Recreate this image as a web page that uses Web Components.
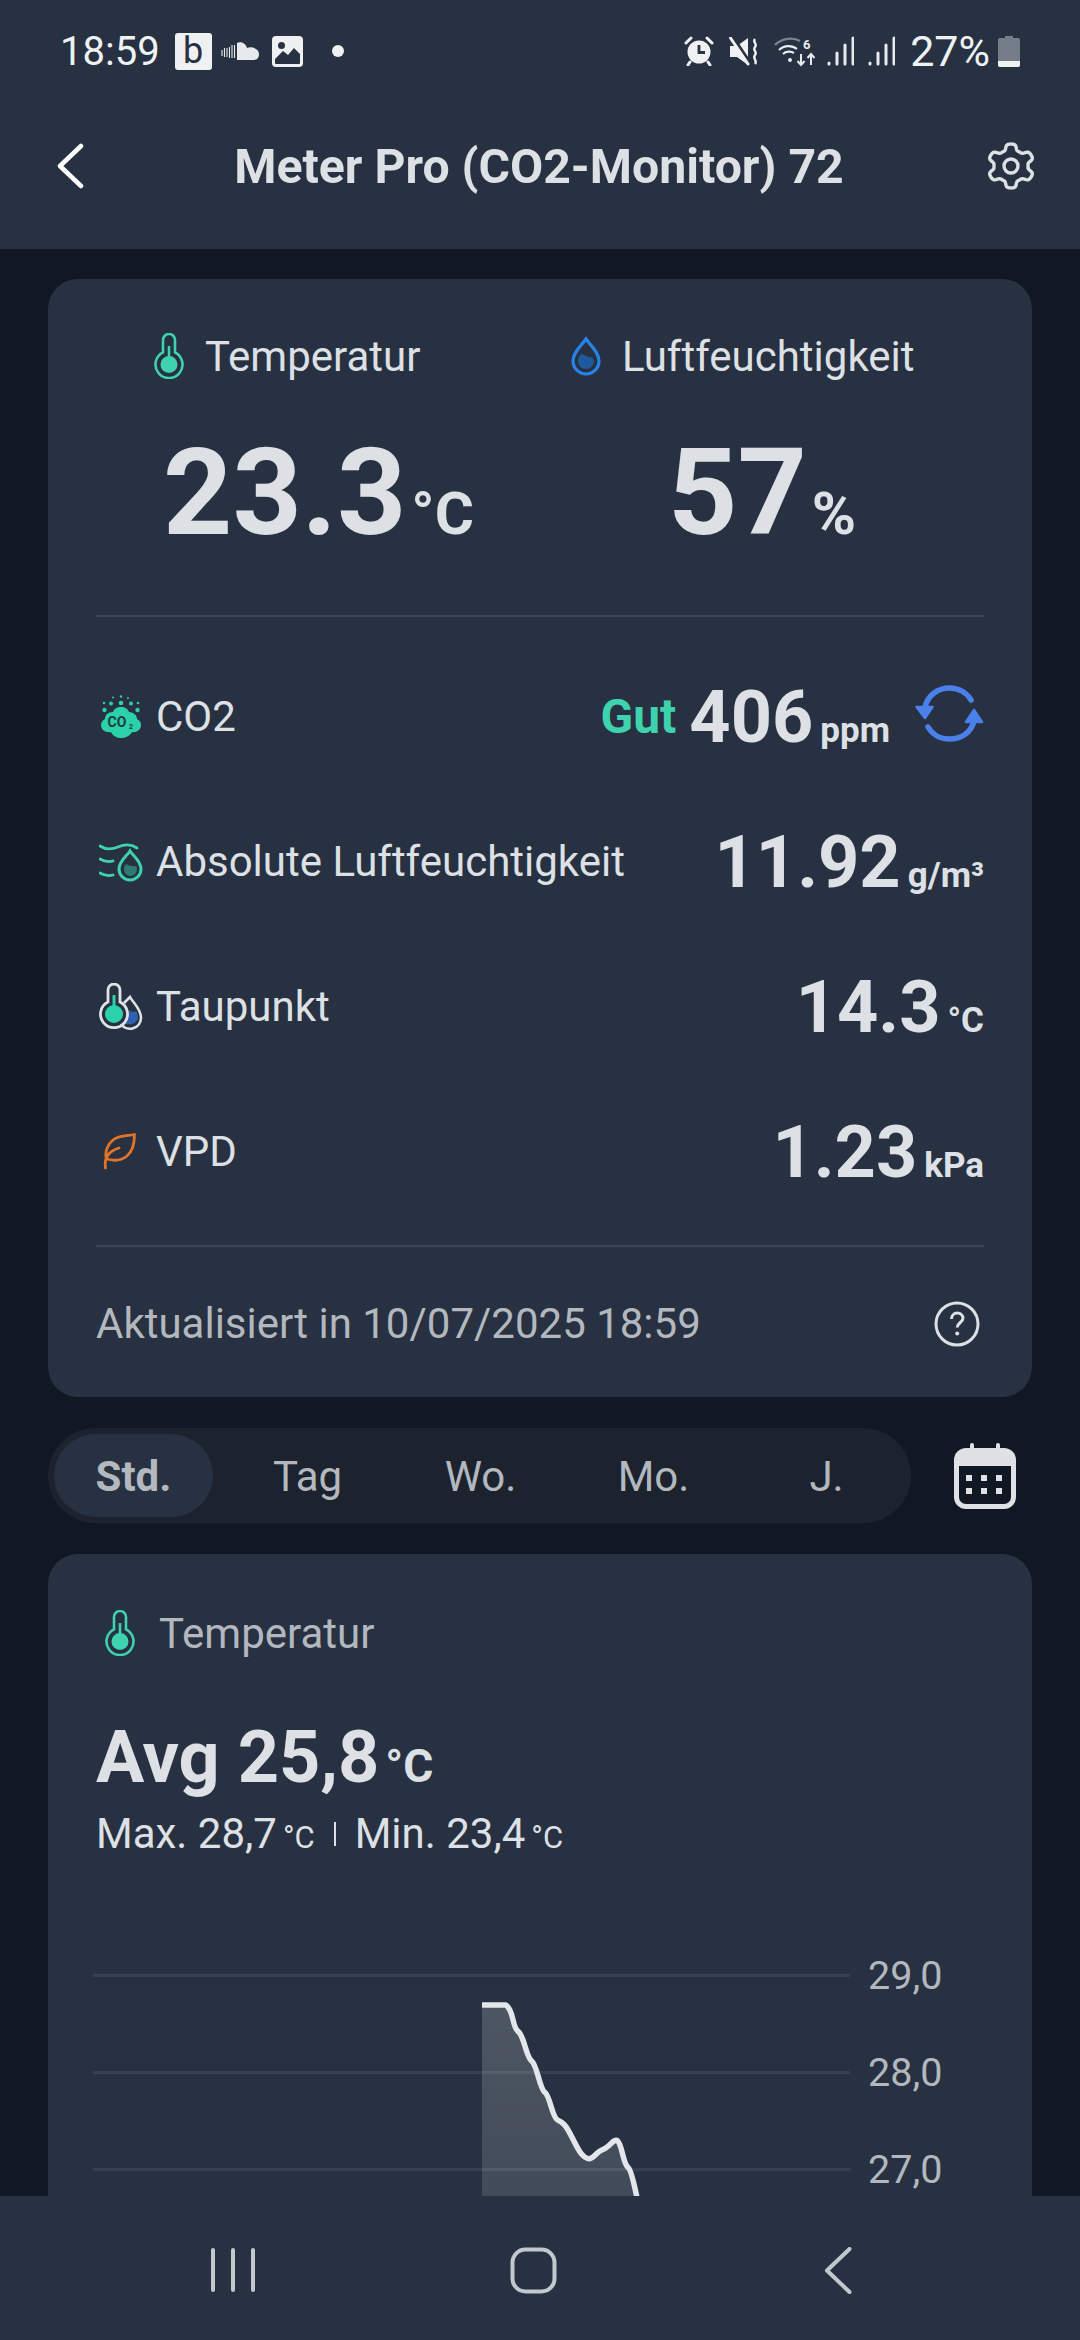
<!DOCTYPE html>
<html lang="de"><head><meta charset="utf-8"><title>Meter Pro</title>
<style>
html,body{margin:0;padding:0;height:100%;}
body{background:#101823;font-family:Roboto,"Liberation Sans",sans-serif;color:#dde0e4;overflow:hidden;}
app-screen{height:2340px;}
</style></head><body>
<app-screen>
  <top-bar slot="top" title="Meter Pro (CO2-Monitor) 72"></top-bar>
  <current-card></current-card>
  <range-tabs></range-tabs>
  <chart-card></chart-card>
</app-screen>
<script>
const thermo=`<svg width="30" height="46" viewBox="0 0 30 46" fill="none" style="display:block"><path d="M9 19.400V7a6 6 0 0 1 12 0v12.400a13.500 13.500 0 1 1-12 0Z" stroke="#3ed3ae" stroke-width="2.600"/><circle cx="15" cy="31.500" r="8.500" fill="#3ed3ae"/><path d="M15 13v16" stroke="#3ed3ae" stroke-width="2.600"/></svg>`;
const gearPath=(()=>{let p=[];for(let i=0;i<180;i++){const a=i/180*Math.PI*2,r=19+3*Math.tanh(2.2*Math.cos(6*(a-Math.PI/2)));p.push((25+1.06*r*Math.cos(a)).toFixed(2)+' '+(24+r*Math.sin(a)).toFixed(2));}return 'M'+p.join('L')+'Z';})();
const ICONS={
 back:`<svg width="30" height="48" viewBox="0 0 30 48" fill="none"><path d="M24 4 3 24l21 20" stroke="#fff" stroke-width="4.500" stroke-linecap="round" stroke-linejoin="round"/></svg>`,
 gear:`<svg width="50" height="48" viewBox="0 0 50 48" fill="none" stroke="#dde0e4" stroke-width="3.400" stroke-linejoin="round"><path d="${gearPath}"/><circle cx="25" cy="24" r="7"/></svg>`,
 sc:`<svg width="39" height="19" viewBox="0 0 39 19"><g stroke="#e7e9ec" stroke-width="1.100"><path d="M1 8v6M3.500 6v9M6 6v9M8.500 5v11M11 3v13M13.500 3v13"/></g><path d="M16 1c5-2 9 1 10 5 5-2 12 1 12 6s-3 6-6 6H16Z" fill="#e7e9ec"/></svg>`,
 img:`<svg width="31" height="31" viewBox="0 0 31 31"><rect width="31" height="31" rx="4" fill="#eef0f2"/><rect x="3" y="3" width="25" height="25" rx="1" fill="#273141"/><path d="M3 23 11 15l5 4 6-7 6 6V3H3Z" fill="#eef0f2"/><circle cx="9.500" cy="9.500" r="3.500" fill="#273141"/></svg>`,
 alarm:`<svg width="30" height="30" viewBox="0 0 30 30"><circle cx="15" cy="16" r="11.500" fill="#f0f1f3"/><path d="M15 9v7.500h6" fill="none" stroke="#273141" stroke-width="2.800"/><path d="M2 7 7 2M28 7 23 2M6 26 4 29M24 26l2 3" stroke="#f0f1f3" stroke-width="3" stroke-linecap="round"/></svg>`,
 mute:`<svg width="30" height="29" viewBox="0 0 30 29"><path d="M1 9h7l11-8v27l-11-8H1Z" fill="#f0f1f3"/><path d="M4 0 22 27" stroke="#273141" stroke-width="3"/><path d="M1.500 1 19 27" stroke="#f0f1f3" stroke-width="3" stroke-linecap="round"/><path d="M26 2c-3 3 3 5 0 8s3 5 0 8 3 6 0 9" fill="none" stroke="#f0f1f3" stroke-width="2.400"/></svg>`,
 wifi:`<svg width="44" height="31" viewBox="0 0 44 31" fill="none"><path d="M1 9C8 2 19 1 26 5" stroke="#7b838e" stroke-width="2.400"/><path d="M5 14c5-5 13-5 18-1M9 18c3-3 8-3 11-1" stroke="#e8eaed" stroke-width="2.200"/><circle cx="16" cy="24" r="2" fill="#e8eaed"/><path d="M27 18v11m-3.500-4 3.500 4 3.500-4M37 29V18m-3.500 4 3.500-4 3.500 4" stroke="#e8eaed" stroke-width="2"/><text x="29" y="13" font-size="13" font-family="Roboto" font-weight="700" fill="#e8eaed">6</text></svg>`,
 signal:`<svg width="27" height="30" viewBox="0 0 27 30" fill="none" stroke="#e8eaed" stroke-width="3" stroke-linecap="round"><path d="M2 28v-1M10 28V17M18 28V9M26 28V2" /></svg>`,
 batt:`<svg width="22" height="31" viewBox="0 0 22 31"><path d="M7 0h8v2h5a2 2 0 0 1 2 2v25a2 2 0 0 1-2 2H2a2 2 0 0 1-2-2V4a2 2 0 0 1 2-2h5Z" fill="#757d88"/><path d="M0 25h22v4a2 2 0 0 1-2 2H2a2 2 0 0 1-2-2Z" fill="#f0f1f3"/></svg>`,
 drop:`<svg width="30" height="40" viewBox="0 0 30 40" fill="none" style="display:block"><path d="M15 3C11 9 2 16 2 25a13 13 0 0 0 26 0C28 16 19 9 15 3Z" stroke="#2684e8" stroke-width="3.200"/><path d="M7 25c0-3 1.500-5 3-7 3 0 5 3 8 3 2.500 0 4 1 5 3 0 6-4 9-8 9s-8-3-8-8Z" fill="#1d5a9e"/></svg>`,
 co2:`<svg style="margin-left:4px" width="42" height="43" viewBox="0 0 42 43"><path d="M21 12c4 0 7 2 8 5 4 0 8 3 8 7 3 2 4 3 4 6 0 5-5 8-9 7-2 4-7 6-11 6s-8-2-10-6c-5 1-10-2-10-7 0-3 2-5 4-6 0-4 3-7 8-7 1-3 4-5 8-5Z" fill="#2ad1a9"/><g fill="#2ad1a9"><circle cx="4.500" cy="15" r="2.200"/><circle cx="37.500" cy="15" r="2.200"/><circle cx="11" cy="8.500" r="2"/><circle cx="31" cy="8.500" r="2"/><circle cx="21" cy="8" r="2.300"/><circle cx="4" cy="8" r="1.300"/><circle cx="38" cy="8" r="1.300"/><circle cx="13" cy="2.500" r="1"/><circle cx="21" cy="1.500" r="1.200"/><circle cx="28" cy="3" r="1"/></g><text x="7.500" y="32" font-family="Roboto,sans-serif" font-weight="700" font-size="14" fill="#1e3a3f">CO</text><text x="29" y="33.500" font-family="Roboto,sans-serif" font-weight="700" font-size="7" fill="#1e3a3f">2</text></svg>`,
 abs:`<svg style="margin-left:3px" width="44" height="40" viewBox="0 0 44 40" fill="none"><path d="M1 4c6 4 11 4 18 1s13-3 19 1M1 17c5 3 9 3 13 2M1 31c5 3 9 3 13 2" stroke="#3ed3ae" stroke-width="2.800" stroke-linecap="round"/><path d="M31 9c-3 5-11 10-11 18a11 11 0 0 0 22 0c0-8-8-13-11-18Z" stroke="#3ed3ae" stroke-width="3"/><path d="M25 27c0-2 1-4 2-5 3 1 5 3 10 2 .5 1 1 2 1 3 0 4-3 7-6.500 7S25 31 25 27Z" fill="#2f7a72"/></svg>`,
 dew:`<svg style="margin-left:3px" width="44" height="47" viewBox="0 0 44 47" fill="none"><path d="M25 20 31 14c3 6 11 11 11 21a11 11 0 0 1-20 6" stroke="#dfe3e7" stroke-width="2.600"/><path d="M29 27c2 3 0 9-5 13 6 3 15 1 15-6 0-2-1-4-2-6-3 2-5 0-8-1Z" fill="#2f5fae"/><path d="M9 19V7a6 6 0 0 1 12 0v12a13.500 13.500 0 1 1-12 0Z" stroke="#dfe3e7" stroke-width="2.800"/><circle cx="15" cy="31" r="9" fill="#2ad1a9"/><path d="M15 12v15" stroke="#2ad1a9" stroke-width="3"/></svg>`,
 leaf:`<svg style="margin-left:7px" width="33" height="37" viewBox="0 0 33 37" fill="none"><path d="M31.500 1.500C24 3 16 2 10 7 5 11 2 18 3 24c0 1 1 2 3 2.500C12 28 19 27 24 23c6-5 7.500-13 7.500-21.500ZM2.500 35C1 25 6 18 16 15" stroke="#e2742a" stroke-width="2.800" stroke-linecap="round" stroke-linejoin="round"/></svg>`,
 sync:`<svg width="69" height="58" viewBox="0 0 69 58" fill="none" style="display:block"><path d="M10 22C13 10 23 3 34.500 3 44 3 52 8 56 15M59 36C56 48 46 54 34.500 54 25 54 17 49 13 42" stroke="#4a80ea" stroke-width="5.500" stroke-linecap="round"/><path d="M1.500 22h16L10 33ZM51 37h16L59 25Z" fill="#4a80ea" stroke="#4a80ea" stroke-width="2.500" stroke-linejoin="round"/></svg>`,
 help:`<svg width="46" height="46" viewBox="0 0 46 46" fill="none"><circle cx="23" cy="23" r="21" stroke="#dde0e4" stroke-width="3"/><path d="M17.500 18c0-3.500 2.500-6 5.700-6 3.300 0 5.800 2.300 5.800 5.300 0 4-5.800 4.500-5.800 9.200" stroke="#dde0e4" stroke-width="3"/><circle cx="23.200" cy="32.500" r="2" fill="#dde0e4"/></svg>`,
 cal:`<svg width="62" height="66" viewBox="0 0 62 66"><rect x="16" y="0" width="4" height="10" rx="2" fill="#dfe1e4"/><rect x="42" y="0" width="4" height="10" rx="2" fill="#dfe1e4"/><rect x="0" y="5" width="62" height="61" rx="12" fill="#dfe1e4"/><path d="M5 23h52v31a7 7 0 0 1-7 7H12a7 7 0 0 1-7-7Z" fill="#101823"/><g fill="#dfe1e4"><rect x="12" y="32" width="6" height="6"/><rect x="27" y="32" width="6" height="6"/><rect x="42" y="32" width="6" height="6"/><rect x="12" y="45" width="6" height="6"/><rect x="27" y="45" width="6" height="6"/><rect x="42" y="45" width="6" height="6"/></g></svg>`,
 recents:`<svg width="46" height="44" viewBox="0 0 46 44" stroke="#c3c7ce" stroke-width="4" stroke-linecap="round"><path d="M3 2v40M23 2v40M43 2v40"/></svg>`,
 home:`<svg width="47" height="47" viewBox="0 0 47 47" fill="none"><rect x="2.500" y="2.500" width="42" height="42" rx="13" stroke="#c3c7ce" stroke-width="4"/></svg>`,
 navback:`<svg width="28" height="47" viewBox="0 0 28 47" fill="none"><path d="M25.500 2 3 23.500 25.500 45" stroke="#c3c7ce" stroke-width="4" stroke-linecap="round" stroke-linejoin="round"/></svg>`
};
const PTS=[[482,2006],[506,2006],[510.6,2010],[515,2030],[521.4,2035],[528.8,2060],[534.4,2064],[542.2,2091.7],[547.4,2095],[554.8,2120],[561.3,2122.7],[567,2128.3],[578.7,2151.7],[584.3,2158.3],[590.8,2160.7],[599.5,2151.7],[606,2149.3],[615.5,2140],[619.9,2144],[625.5,2166.7],[631.1,2170.7],[642,2222]];
const curve=(()=>{let d='M'+PTS[0].join(' ')+'L506 2006';for(let i=2;i<PTS.length-1;i++){const[a,b]=PTS[i],[c,e]=PTS[i+1];d+=`Q${a} ${b} ${((a+c)/2).toFixed(1)} ${((b+e)/2).toFixed(1)}`;}return d+'L642 2222';})();
function def(name,css,html){
  customElements.define(name,class extends HTMLElement{
    connectedCallback(){
      if(this.shadowRoot)return;
      const r=this.attachShadow({mode:'open'});
      const h=typeof html==='function'?html(this):html;
      r.innerHTML=`<style>${css}</style>${h}`;
    }
  });
}
def('app-screen',`:host{display:flex;flex-direction:column;height:2340px;overflow:hidden;background:#101823}
 .top{flex:none}.main{flex:1;min-height:0;overflow:hidden;padding:30px 48px 0;display:flex;flex-direction:column}
 .nav{flex:none}`,
 `<slot name="top"></slot><div class="main"><slot></slot></div><nav-bar class="nav"></nav-bar>`);
def('status-bar',`:host{display:flex;align-items:center;height:100px;padding:2px 60px 0;font:400 40px Roboto,sans-serif;color:#f0f1f3;box-sizing:border-box}
 .l,.r{display:flex;align-items:center}.sp{flex:1}
 .b{width:37px;height:37px;border-radius:3px;background:#eef0f2;color:#273141;font:400 36px/37px Roboto,sans-serif;text-align:center;margin-left:15px}
 .dot{width:12px;height:12px;border-radius:50%;background:#f0f1f3;margin-left:29px}
 svg{display:block}`,
 `<div class="l"><span>18:59</span><span class="b">b</span><span style="margin-left:9px">${ICONS.sc}</span><span style="margin-left:12px">${ICONS.img}</span><span class="dot"></span></div><div class="sp"></div>
 <div class="r"><span>${ICONS.alarm}</span><span style="margin-left:15px">${ICONS.mute}</span><span style="margin-left:15px">${ICONS.wifi}</span><span style="margin-left:9px">${ICONS.signal}</span><span style="margin-left:14px">${ICONS.signal}</span><span style="margin-left:15px;font-size:43px">27%</span><span style="margin-left:8px">${ICONS.batt}</span></div>`);
def('top-bar',`:host{display:block;background:#273141;height:249px}
 .h{display:flex;align-items:center;height:132px;padding:0 44px 0 57px}
 h1{flex:1;margin:0 -5px 0 0;text-align:center;font:700 48.200px Roboto,sans-serif;color:#dde0e4}
 svg{display:block}`,
 t=>`<status-bar></status-bar><div class="h">${ICONS.back}<h1>${t.getAttribute('title')}</h1>${ICONS.gear}</div>`);
def('big-metric',`:host{display:flex;flex-direction:column;align-items:flex-start;box-sizing:border-box}
 .lab{display:flex;align-items:center;gap:21px;font:400 42px Roboto,sans-serif;color:#dde0e4;height:46px}
 .val{font:700 121px/1 Roboto,sans-serif;color:#dde0e4;margin-top:54px;white-space:nowrap}
 .u{font-size:60px;margin-left:5px;font-weight:700}`,
 t=>`<div class="lab">${t.dataset.icon==='t'?thermo:ICONS.drop}<span>${t.getAttribute('label')}</span></div><div class="val" style="margin-left:${t.getAttribute('shift')}px">${t.getAttribute('value')}<span class="u">${t.getAttribute('unit')}</span></div>`);
def('metric-row',`:host{display:flex;flex:none;align-items:center;height:145px;font:400 42px Roboto,sans-serif;color:#dde0e4}
 .ic{width:60px;flex:none;display:flex}.sp{flex:1}
 .v{font:700 72px/1 Roboto,sans-serif;white-space:nowrap;display:flex;align-items:baseline;margin-top:2px}
 .u{font-size:35px;font-weight:700;margin-left:7px}`,
 t=>`<span class="ic">${ICONS[t.dataset.icon]}</span><span>${t.getAttribute('label')}</span><span class="sp"></span><slot></slot><span class="v">${t.getAttribute('value')}<span class="u">${t.getAttribute('unit')}</span></span><slot name="end"></slot>`);
def('current-card',`:host{display:block;flex:none;background:#273141;border-radius:30px;height:1118px;box-sizing:border-box;padding:0 48px}
 .top{display:flex;height:338px;border-bottom:2px solid #3c4655;box-sizing:border-box;padding-top:54px}
 .top big-metric:nth-child(1){width:445px;padding-left:58px}.top big-metric:nth-child(2){width:443px;padding-left:30px}
 .list{height:630px;padding-top:27px;box-sizing:border-box;border-bottom:2px solid #3c4655;display:flex;flex-direction:column}
 .gut{font:700 48px Roboto,sans-serif;color:#3ed3ae;margin-right:13px}
 .sync{margin-left:25px;display:block;margin-top:-6px}
 .foot{display:flex;justify-content:space-between;align-items:center;height:150px;padding-top:3px;box-sizing:border-box;font:400 42px Roboto,sans-serif;color:#b3b8bf}
 .foot svg{display:block;margin-right:4px}`,
 `<div class="top"><big-metric data-icon="t" shift="9" label="Temperatur" value="23.3" unit="°C"></big-metric><big-metric data-icon="d" shift="97" label="Luftfeuchtigkeit" value="57" unit="%"></big-metric></div>
 <div class="list">
 <metric-row data-icon="co2" label="CO2" value="406" unit="ppm"><span class="gut">Gut</span><span slot="end" class="sync">${ICONS.sync}</span></metric-row>
 <metric-row data-icon="abs" label="Absolute Luftfeuchtigkeit" value="11.92" unit="g/m³"></metric-row>
 <metric-row data-icon="dew" label="Taupunkt" value="14.3" unit="°C"></metric-row>
 <metric-row data-icon="leaf" label="VPD" value="1.23" unit="kPa"></metric-row>
 </div>
 <div class="foot"><span>Aktualisiert in 10/07/2025 18:59</span>${ICONS.help}</div>`);
def('range-tabs',`:host{display:flex;flex:none;align-items:center;margin-top:31px;height:95px}
 .seg{width:863px;height:95px;border-radius:48px;background:#1c232e;display:grid;grid-template-columns:repeat(5,173px);box-sizing:border-box;padding:6px 0;font:400 42px Roboto,sans-serif;color:#b3b8bf}
 .t{display:flex;align-items:center;justify-content:center;padding-top:2px}
 .a{margin-left:6px;width:159px;background:#273141;border-radius:42px;font-weight:700}
 .c{margin-left:43px;display:block}svg{display:block}`,
 `<div class="seg"><span class="t a">Std.</span><span class="t">Tag</span><span class="t">Wo.</span><span class="t">Mo.</span><span class="t">J.</span></div><span class="c">${ICONS.cal}</span>`);
def('temp-chart',`:host{display:block;position:relative;margin-top:72px}
 .row{display:flex;align-items:center;height:97px}
 .line{width:757px;height:3px;background:#364050;margin-left:-3px}
 .lab{margin-left:18px;font:400 39.500px Roboto,sans-serif;color:#b3b8bf}
 svg{position:absolute;left:-48px;top:0;display:block}`,
 `<div class="row"><span class="line"></span><span class="lab">29,0</span></div><div class="row"><span class="line"></span><span class="lab">28,0</span></div><div class="row"><span class="line"></span><span class="lab">27,0</span></div><div class="row"><span class="line"></span><span class="lab">26,0</span></div>
 <svg width="984" height="400" viewBox="48 1928 984 400" fill="none"><defs><linearGradient id="g" x1="0" y1="0" x2="0" y2="1"><stop offset="0" stop-color="#fff" stop-opacity=".18"/><stop offset="1" stop-color="#fff" stop-opacity=".1"/></linearGradient></defs>
 <path d="${curve}V2300H482Z" fill="url(#g)"/>
 <path d="${curve}" stroke="#e3e6ea" stroke-width="5.500" stroke-linejoin="round"/></svg>`);
def('chart-card',`:host{display:block;flex:none;background:#273141;border-radius:30px 30px 0 0;margin-top:31px;padding:0 48px;height:800px}
 .h{display:flex;align-items:center;gap:24px;height:46px;padding-top:56px;padding-left:9px;font:400 42px Roboto,sans-serif;color:#b3b8bf}
 .avg{font:700 72px/1 Roboto,sans-serif;color:#dde0e4;margin-top:66px}
 .avg small{font-size:46px;font-weight:700;margin-left:6px}
 .mm{display:flex;align-items:baseline;font:400 42px/1 Roboto,sans-serif;color:#dde0e4;margin-top:19px}
 .mm small{font-size:31px;margin-left:6px}.sep{width:2px;height:24px;background:#dde0e4;margin:0 19px;align-self:center}`,
 `<div class="h">${thermo}<span>Temperatur</span></div>
 <div class="avg">Avg 25,8<small>°C</small></div>
 <div class="mm"><span>Max. 28,7</span><small>°C</small><span class="sep"></span><span>Min. 23,4</span><small>°C</small></div>
 <temp-chart></temp-chart>`);
def('nav-bar',`:host{display:flex;align-items:center;height:144px;background:#273141;padding-top:4px;box-sizing:border-box}
 span{display:block}svg{display:block}`,
 `<span style="margin-left:210px">${ICONS.recents}</span><span style="margin-left:254px">${ICONS.home}</span><span style="margin-left:267px">${ICONS.navback}</span>`);
</script>
</body></html>
